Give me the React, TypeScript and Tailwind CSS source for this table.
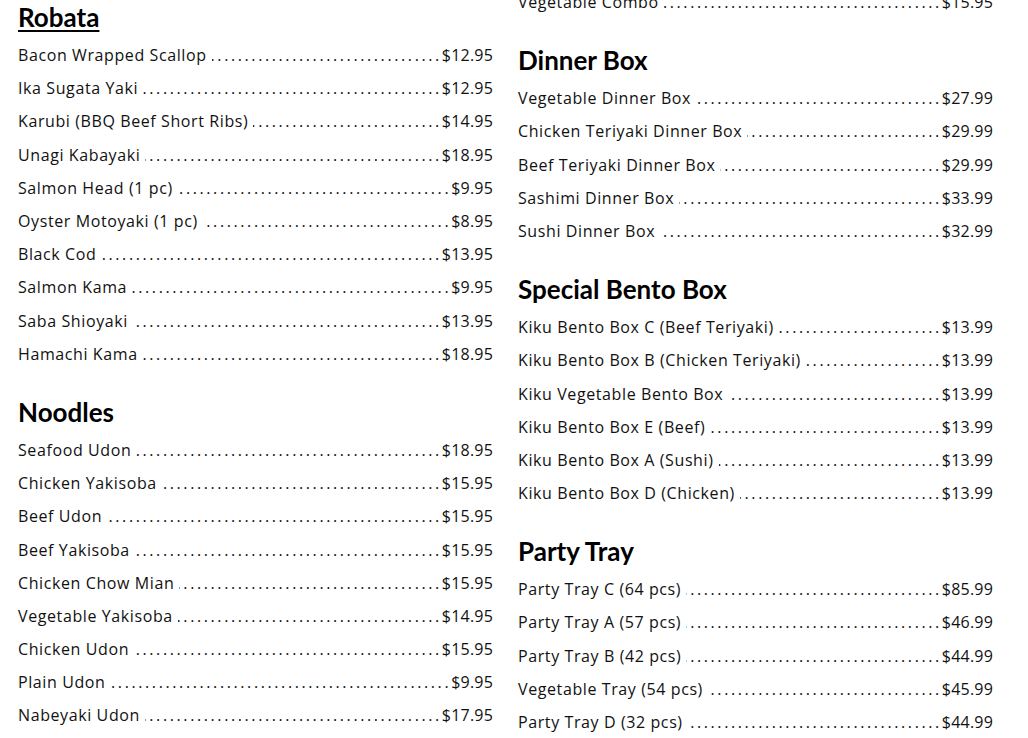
type Item = { name: string; price: string };
type Section = { title: string; items: Item[]; underline?: boolean };

const left: Section[] = [
  {
    title: "Robata",
    underline: true,
    items: [
      { name: "Bacon Wrapped Scallop", price: "$12.95" },
      { name: "Ika Sugata Yaki", price: "$12.95" },
      { name: "Karubi (BBQ Beef Short Ribs)", price: "$14.95" },
      { name: "Unagi Kabayaki", price: "$18.95" },
      { name: "Salmon Head (1 pc)", price: "$9.95" },
      { name: "Oyster Motoyaki (1 pc)", price: "$8.95" },
      { name: "Black Cod", price: "$13.95" },
      { name: "Salmon Kama", price: "$9.95" },
      { name: "Saba Shioyaki", price: "$13.95" },
      { name: "Hamachi Kama", price: "$18.95" },
    ],
  },
  {
    title: "Noodles",
    items: [
      { name: "Seafood Udon", price: "$18.95" },
      { name: "Chicken Yakisoba", price: "$15.95" },
      { name: "Beef Udon", price: "$15.95" },
      { name: "Beef Yakisoba", price: "$15.95" },
      { name: "Chicken Chow Mian", price: "$15.95" },
      { name: "Vegetable Yakisoba", price: "$14.95" },
      { name: "Chicken Udon", price: "$15.95" },
      { name: "Plain Udon", price: "$9.95" },
      { name: "Nabeyaki Udon", price: "$17.95" },
    ],
  },
];

const right: Section[] = [
  {
    title: "Dinner Box",
    items: [
      { name: "Vegetable Dinner Box", price: "$27.99" },
      { name: "Chicken Teriyaki Dinner Box", price: "$29.99" },
      { name: "Beef Teriyaki Dinner Box", price: "$29.99" },
      { name: "Sashimi Dinner Box", price: "$33.99" },
      { name: "Sushi Dinner Box", price: "$32.99" },
    ],
  },
  {
    title: "Special Bento Box",
    items: [
      { name: "Kiku Bento Box C (Beef Teriyaki)", price: "$13.99" },
      { name: "Kiku Bento Box B (Chicken Teriyaki)", price: "$13.99" },
      { name: "Kiku Vegetable Bento Box", price: "$13.99" },
      { name: "Kiku Bento Box E (Beef)", price: "$13.99" },
      { name: "Kiku Bento Box A (Sushi)", price: "$13.99" },
      { name: "Kiku Bento Box D (Chicken)", price: "$13.99" },
    ],
  },
  {
    title: "Party Tray",
    items: [
      { name: "Party Tray C (64 pcs)", price: "$85.99" },
      { name: "Party Tray A (57 pcs)", price: "$46.99" },
      { name: "Party Tray B (42 pcs)", price: "$44.99" },
      { name: "Vegetable Tray (54 pcs)", price: "$45.99" },
      { name: "Party Tray D (32 pcs)", price: "$44.99" },
    ],
  },
];

const DOTS = ".".repeat(110);

function Row({ item }: { item: Item }) {
  return (
    <div className="flex h-[33.2px] items-center text-[16px] tracking-[0.6px] text-[#111]">
      <span className="whitespace-nowrap">{item.name}</span>
      <div className="ml-[5px] flex min-w-0 flex-1 justify-end overflow-hidden">
        <span className="whitespace-nowrap tracking-[2.6px]">{DOTS}</span>
      </div>
      <span className="whitespace-nowrap tracking-[0.2px]">{item.price}</span>
    </div>
  );
}

function MenuSection({ section }: { section: Section }) {
  return (
    <section className="mb-[25.5px]">
      <h2
        className={`mb-[5.5px] h-8 text-[26px] leading-8 font-bold text-black [font-family:Lato,sans-serif] ${
          section.underline ? "underline decoration-2 underline-offset-[3px]" : ""
        }`}
      >
        {section.title}
      </h2>
      {section.items.map((item) => (
        <Row key={item.name} item={item} />
      ))}
    </section>
  );
}

export default function App() {
  return (
    <div className="h-[738px] overflow-hidden bg-white [font-family:'Open_Sans',sans-serif]">
      <div className="grid grid-cols-2 gap-x-[25px] pr-[35px] pl-[18px]">
        <div className="pt-px">
          {left.map((s) => (
            <MenuSection key={s.title} section={s} />
          ))}
        </div>
        <div className="-mt-[14.6px]">
          <div className="mb-[25.5px]">
            <Row item={{ name: "Vegetable Combo", price: "$15.95" }} />
          </div>
          {right.map((s) => (
            <MenuSection key={s.title} section={s} />
          ))}
        </div>
      </div>
    </div>
  );
}
